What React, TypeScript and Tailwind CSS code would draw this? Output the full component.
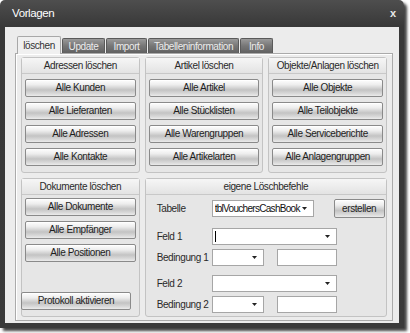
import React from "react";

function Btn({ children, className = "" }: { children: React.ReactNode; className?: string }) {
  return (
    <button
      className={`flex h-[18px] shrink-0 items-center justify-center whitespace-nowrap rounded-[2px] border border-[#8a8a8a] bg-[linear-gradient(to_bottom,#fefefe_0%,#ededed_30%,#c3c3c3_62%,#d9d9d9_85%,#ebebeb_100%)] text-[10px] leading-none tracking-[-0.4px] text-[#1e1e1e] shadow-[inset_0_1px_0_#ffffff] ${className}`}
    >
      {children}
    </button>
  );
}

function Arrow() {
  return (
    <svg width="5" height="3" viewBox="0 0 5 3" className="shrink-0">
      <path d="M0 0h5L2.5 3z" fill="#222" />
    </svg>
  );
}

function Combo({ className = "", children }: { className?: string; children?: React.ReactNode }) {
  return (
    <div className={`flex h-[17px] shrink-0 items-center border border-[#a6a6a6] bg-white pl-[2px] pr-[6px] ${className}`}>
      <div className="flex flex-1 items-center overflow-hidden">{children}</div>
      <Arrow />
    </div>
  );
}

function Group({ title, children, className = "" }: { title: string; children: React.ReactNode; className?: string }) {
  return (
    <div className={`flex flex-col rounded-[3px] border border-[#c3c3c3] bg-[#e6e6e6] ${className}`}>
      <div className="flex h-[16px] shrink-0 items-center justify-center whitespace-nowrap border-b border-[#c8c8c8] bg-[linear-gradient(to_bottom,#f6f6f6,#e3e3e3)] text-[10px] tracking-[-0.4px] text-[#2a2a2a]">
        {title}
      </div>
      {children}
    </div>
  );
}

const tabs = [
  { label: "Update", w: "w-[43px]" },
  { label: "Import", w: "w-[41px]" },
  { label: "Tabelleninformation", w: "w-[91px]" },
  { label: "Info", w: "w-[33px]" },
];

export default function App() {
  return (
    <div className="h-[333px] w-[410px] bg-white font-['Liberation_Sans',sans-serif]">
      <div className="flex h-[328px] w-[404px] flex-col rounded-t-[5px] bg-[linear-gradient(to_bottom,#4e4e4e,#383838_27px,#3a3a3a)] shadow-[3px_3px_3px_rgba(0,0,0,0.75)]">
        {/* Title bar */}
        <div className="flex h-[27px] shrink-0 items-center justify-between pl-[12px] pr-[8px]">
          <span className="text-[11.5px] tracking-[-0.4px] text-white">Vorlagen</span>
          <span className="text-[11px] font-bold text-[#e8e8e8]">x</span>
        </div>

        {/* Body */}
        <div className="mx-[5px] flex h-[296px] flex-col bg-[#ececec] pt-[9px]">
          {/* Tabs */}
          <div className="flex h-[17px] items-end gap-[1px] pl-[12px] text-[10px] tracking-[-0.4px]">
            <div className="relative z-10 -mb-px flex h-[18px] w-[44px] items-center justify-center rounded-t-[2px] border border-b-0 border-[#a8a8a8] bg-[#f0f0f0] text-[#333]">
              löschen
            </div>
            {tabs.map((t) => (
              <div
                key={t.label}
                className={`flex h-[15px] items-center justify-center whitespace-nowrap rounded-t-[2px] border border-b-0 border-[#5a5a5a] bg-[linear-gradient(to_bottom,#9a9a9a,#767676_50%,#626262)] text-[#ececec] ${t.w}`}
              >
                {t.label}
              </div>
            ))}
          </div>

          {/* Tab panel */}
          <div className="ml-[10px] mr-[6px] h-[268px] border border-[#aaaaaa] bg-[#ececec] px-[5px] py-[3px] shadow-[inset_1px_1px_0_#ffffff]">
            <div className="grid h-full grid-cols-3 grid-rows-[116px_1fr] gap-[5px]">
              <Group title="Adressen löschen">
                <div className="flex flex-col gap-[5px] px-[3px] pt-[5px]">
                  <Btn>Alle Kunden</Btn>
                  <Btn>Alle Lieferanten</Btn>
                  <Btn>Alle Adressen</Btn>
                  <Btn>Alle Kontakte</Btn>
                </div>
              </Group>
              <Group title="Artikel löschen">
                <div className="flex flex-col gap-[5px] px-[3px] pt-[5px]">
                  <Btn>Alle Artikel</Btn>
                  <Btn>Alle Stücklisten</Btn>
                  <Btn>Alle Warengruppen</Btn>
                  <Btn>Alle Artikelarten</Btn>
                </div>
              </Group>
              <Group title="Objekte/Anlagen löschen">
                <div className="flex flex-col gap-[5px] px-[3px] pt-[5px]">
                  <Btn>Alle Objekte</Btn>
                  <Btn>Alle Teilobjekte</Btn>
                  <Btn>Alle Serviceberichte</Btn>
                  <Btn>Alle Anlagengruppen</Btn>
                </div>
              </Group>

              <Group title="Dokumente löschen">
                <div className="flex flex-1 flex-col px-[3px] pb-[6px] pt-[3px]">
                  <div className="flex flex-col gap-[5px]">
                    <Btn>Alle Dokumente</Btn>
                    <Btn>Alle Empfänger</Btn>
                    <Btn>Alle Positionen</Btn>
                  </div>
                  <Btn className="-ml-[4px] mt-auto w-[110px]">Protokoll aktivieren</Btn>
                </div>
              </Group>

              <Group title="eigene Löschbefehle" className="col-span-2">
                <div className="flex flex-col whitespace-nowrap pl-[11px] pt-[4px] text-[10px] tracking-[-0.4px] text-[#2a2a2a]">
                  <div className="flex h-[19px] items-center">
                    <span className="w-[55px]">Tabelle</span>
                    <Combo className="h-[16px] w-[102px] bg-[#fbfb86]">
                      <span className="leading-none tracking-[-0.7px] text-[#111]">tblVouchersCashBook</span>
                    </Combo>
                    <Btn className="ml-[20px] h-[19px] w-[51px]">erstellen</Btn>
                  </div>
                  <div className="mt-[10px] flex h-[17px] items-center">
                    <span className="w-[55px]">Feld 1</span>
                    <Combo className="w-[125px]">
                      <span className="h-[11px] w-px bg-black" />
                    </Combo>
                  </div>
                  <div className="mt-[4px] flex h-[17px] items-center">
                    <span className="w-[55px]">Bedingung 1</span>
                    <Combo className="w-[52px]" />
                    <div className="ml-[13px] h-[17px] w-[60px] border border-[#a6a6a6] bg-white" />
                  </div>
                  <div className="mt-[9px] flex h-[17px] items-center">
                    <span className="w-[55px]">Feld 2</span>
                    <Combo className="w-[125px]" />
                  </div>
                  <div className="mt-[4px] flex h-[17px] items-center">
                    <span className="w-[55px]">Bedingung 2</span>
                    <Combo className="w-[52px]" />
                    <div className="ml-[13px] h-[17px] w-[60px] border border-[#a6a6a6] bg-white" />
                  </div>
                </div>
              </Group>
            </div>
          </div>
        </div>
      </div>
    </div>
  );
}
